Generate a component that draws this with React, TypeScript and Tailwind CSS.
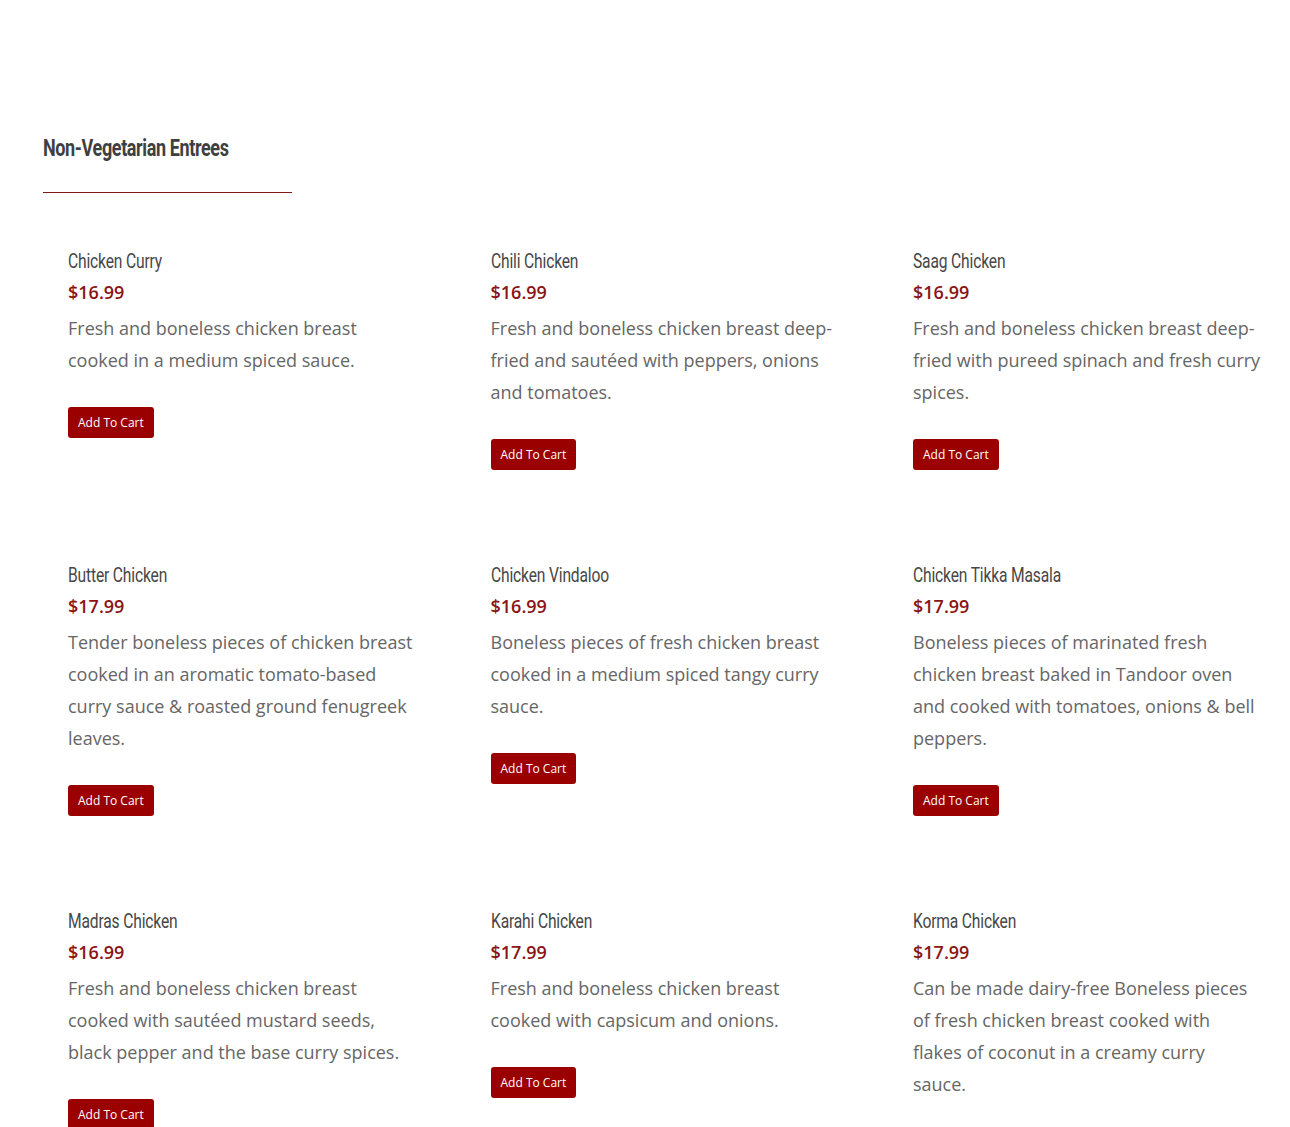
const items = [
  { name: 'Chicken Curry', price: '$16.99', desc: 'Fresh and boneless chicken breast cooked in a medium spiced sauce.' },
  { name: 'Chili Chicken', price: '$16.99', desc: 'Fresh and boneless chicken breast deep-fried and sautéed with peppers, onions and tomatoes.' },
  { name: 'Saag Chicken', price: '$16.99', desc: 'Fresh and boneless chicken breast deep-fried with pureed spinach and fresh curry spices.' },
  { name: 'Butter Chicken', price: '$17.99', desc: 'Tender boneless pieces of chicken breast cooked in an aromatic tomato-based curry sauce & roasted ground fenugreek leaves.' },
  { name: 'Chicken Vindaloo', price: '$16.99', desc: 'Boneless pieces of fresh chicken breast cooked in a medium spiced tangy curry sauce.' },
  { name: 'Chicken Tikka Masala', price: '$17.99', desc: 'Boneless pieces of marinated fresh chicken breast baked in Tandoor oven and cooked with tomatoes, onions & bell peppers.' },
  { name: 'Madras Chicken', price: '$16.99', desc: 'Fresh and boneless chicken breast cooked with sautéed mustard seeds, black pepper and the base curry spices.' },
  { name: 'Karahi Chicken', price: '$17.99', desc: 'Fresh and boneless chicken breast cooked with capsicum and onions.' },
  { name: 'Korma Chicken', price: '$17.99', desc: 'Can be made dairy-free Boneless pieces of fresh chicken breast cooked with flakes of coconut in a creamy curry sauce.' },
]

// narrow headings, stand-in for Oswald
const condensed = { fontFamily: 'Roboto, "Liberation Sans", sans-serif' }

export default function App() {
  return (
    <div className="min-h-screen bg-white pt-[134px]" style={{ fontFamily: '"Open Sans", sans-serif' }}>
      <div className="px-[43px]">
        <h2 className="h-[28px] text-[24px] leading-[28px] font-bold text-[#3f3f3f]" style={condensed}>
          <span className="block origin-left [transform:scaleX(0.75)] tracking-[-0.5px] whitespace-nowrap">
            Non-Vegetarian Entrees
          </span>
        </h2>
        <div className="w-[249px] h-px bg-[#7a1a1a] mt-[30px]" />
      </div>

      <div className="grid grid-cols-[348px_348px_348px] gap-x-[74.5px] gap-y-[93px] pl-[68px] mt-[56px]">
        {items.map(item => (
          <div key={item.name}>
            <h3 className="h-[24px] text-[20px] leading-[24px] font-normal text-[#474747]" style={condensed}>
              <span className="block origin-left [transform:scaleX(0.78)] tracking-[-0.2px] whitespace-nowrap">
                {item.name}
              </span>
            </h3>
            <p className="mt-[7px] text-[18px] leading-[24px] font-semibold text-[#8b1414]">{item.price}</p>
            <p className="mt-[8px] text-[18px] leading-[32px] text-[#666]">{item.desc}</p>
            <button className="mt-[31px] h-[31px] px-[10px] rounded-[3px] bg-[#9b0000] text-white text-[12px] leading-none">
              Add To Cart
            </button>
          </div>
        ))}
      </div>
    </div>
  )
}
